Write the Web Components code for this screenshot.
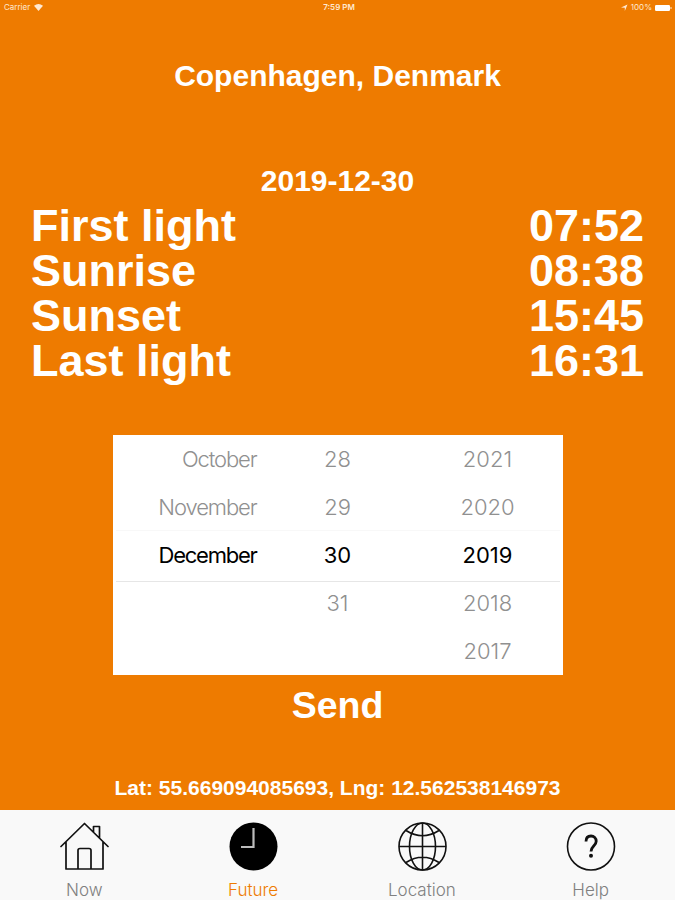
<!DOCTYPE html>
<html lang="en">

<head>
  <meta charset="UTF-8">
  <meta name="viewport" content="width=device-width, initial-scale=1.0">
  <title>Daylight</title>
  <style>
    html, body {
      margin: 0;
      height: 100%;
    }
    body {
      overflow: hidden;
      font-family: "Liberation Sans", Arial, sans-serif;
    }
  </style>
</head>

<body>
  <daylight-app>
    <status-bar slot="status"></status-bar>
    <text-line size="30">Copenhagen, Denmark</text-line>
    <text-line size="30" style="margin-top: 75px">2019-12-30</text-line>
    <div style="margin: 7px 31px 0">
      <time-row value="07:52">First light</time-row>
      <time-row value="08:38">Sunrise</time-row>
      <time-row value="15:45">Sunset</time-row>
      <time-row value="16:31">Last light</time-row>
    </div>
    <date-picker></date-picker>
    <text-line size="37.5" style="margin-top: 12px">Send</text-line>
    <text-line size="21" style="margin-top: 52px">Lat: 55.669094085693, Lng: 12.562538146973</text-line>
    <tab-bar slot="tabs">
      <tab-item label="Now">
        <svg width="50" height="50" viewBox="0 0 50 50" fill="none" stroke="#111" stroke-width="1.7" stroke-linejoin="round" stroke-linecap="round">
          <path d="M2 25.500 25.500 2.500 49 25.500M7 21v27h37V21M19 48V29.500q0-2 2-2h9q2 0 2 2V48M34.500 11V5.500h6V17" />
        </svg>
      </tab-item>
      <tab-item label="Future" active>
        <svg width="50" height="50" viewBox="0 0 50 50" fill="none">
          <circle cx="25.500" cy="25.500" r="24" fill="#000" />
          <path d="M25.500 7v19H13" stroke="#bbb" stroke-width="2.200" />
        </svg>
      </tab-item>
      <tab-item label="Location">
        <svg width="50" height="50" viewBox="0 0 50 50" fill="none" stroke="#111" stroke-width="1.6">
          <circle cx="25.500" cy="25.500" r="23.500" />
          <ellipse cx="25.500" cy="25.500" rx="13" ry="23.500" />
          <path d="M25.500 2v47M2 25.500h47M9 9.500q16.500 10.500 33 0M9 41.500q16.500-10.500 33 0" />
        </svg>
      </tab-item>
      <tab-item label="Help">
        <svg width="50" height="50" viewBox="0 0 50 50" fill="none" stroke="#111">
          <circle cx="25" cy="25.500" r="23.500" stroke-width="1.6" />
          <path d="M20 20.500c0-3.500 2-5.500 5-5.500s5.200 2 5.200 5.200c0 4.800-5.200 5-5.200 10.300" stroke-width="2.800" />
          <circle cx="25" cy="34.800" r="2" fill="#111" stroke="none" />
        </svg>
      </tab-item>
    </tab-bar>
  </daylight-app>

  <script>
    class DaylightApp extends HTMLElement {
      constructor() {
        super();
        this.attachShadow({ mode: 'open' }).innerHTML = `
          <style>
            :host {
              display: flex;
              flex-direction: column;
              height: 900px;
              background: #ee7b00;
              color: #fff;
            }
            main {
              flex: 1;
              padding-top: 46px;
            }
          </style>
          <slot name="status"></slot>
          <main><slot></slot></main>
          <slot name="tabs"></slot>
        `;
      }
    }

    class StatusBar extends HTMLElement {
      constructor() {
        super();
        this.attachShadow({ mode: 'open' }).innerHTML = `
          <style>
            :host {
              display: grid;
              grid-template-columns: 1fr auto 1fr;
              align-items: center;
              height: 15px;
              padding: 0 3px 0 4px;
              font: 8px/15px Inter, sans-serif;
              color: #ffe9d2;
            }
            div {
              display: flex;
              align-items: center;
            }
            .time {
              padding-left: 2px;
              font-weight: 600;
            }
            .right {
              justify-content: flex-end;
              gap: 3px;
            }
            .left {
              gap: 4px;
            }
          </style>
          <div class="left">
            <span>Carrier</span>
            <svg width="9" height="7" viewBox="0 0 9 7"><path d="M0 1.800Q4.500-1.600 9 1.800L4.500 7Z" fill="currentColor"/></svg>
          </div>
          <div class="time">7:59 PM</div>
          <div class="right">
            <svg width="7" height="7" viewBox="0 0 7 7"><path d="M0 3.500 6.500.500 3.800 7V3.800Z" fill="currentColor"/></svg>
            <span>100%</span>
            <svg width="17" height="6" viewBox="0 0 17 6"><rect width="15" height="6" rx="1.200" fill="#fff"/><path d="M16 2v2" stroke="#ffe9d2"/></svg>
          </div>
        `;
      }
    }

    class TextLine extends HTMLElement {
      constructor() {
        super();
        this.attachShadow({ mode: 'open' });
      }

      connectedCallback() {
        this.shadowRoot.innerHTML = `
          <style>
            :host {
              display: block;
              text-align: center;
              font-weight: bold;
              font-size: ${this.getAttribute('size')}px;
              line-height: 1;
            }
          </style>
          <slot></slot>
        `;
      }
    }

    class TimeRow extends HTMLElement {
      constructor() {
        super();
        this.attachShadow({ mode: 'open' });
      }

      connectedCallback() {
        this.shadowRoot.innerHTML = `
          <style>
            :host {
              display: flex;
              justify-content: space-between;
              font-size: 45px;
              font-weight: bold;
              line-height: 45px;
            }
          </style>
          <span><slot></slot></span>
          <span>${this.getAttribute('value')}</span>
        `;
      }
    }

    class DatePicker extends HTMLElement {
      constructor() {
        super();
        this.attachShadow({ mode: 'open' });
      }

      connectedCallback() {
        const rows = [
          ['October', '28', '2021'],
          ['November', '29', '2020'],
          ['December', '30', '2019'],
          ['', '31', '2018'],
          ['', '', '2017']
        ];
        this.shadowRoot.innerHTML = `
          <style>
            :host {
              display: block;
              width: 450px;
              height: 240px;
              margin: 52px auto 0;
              background: #fff;
              color: #909090;
              font: 300 22px/49px Inter, sans-serif;
            }
            .row {
              display: grid;
              grid-template-columns: 145px 160px 140px;
              height: 48px;
              text-align: center;
            }
            .row span:first-child {
              padding-right: 1px;
              text-align: right;
              letter-spacing: -1.1px;
            }
            .selected {
              height: 50px;
              margin: -1px 3px -3px;
              grid-template-columns: 142px 160px 140px;
              border-top: 1px solid #f8f8f8;
              border-bottom: 1px solid #e6e6e6;
              font-weight: 400;
              color: #000;
            }
            .selected span:first-child {
              letter-spacing: -1.25px;
            }
          </style>
          ${rows.map((row, i) => `
            <div class="row ${i === 2 ? 'selected' : ''}">
              ${row.map(text => `<span>${text}</span>`).join('')}
            </div>
          `).join('')}
        `;
      }
    }

    class TabBar extends HTMLElement {
      constructor() {
        super();
        this.attachShadow({ mode: 'open' }).innerHTML = `
          <style>
            :host {
              display: grid;
              grid-template-columns: repeat(4, 1fr);
              height: 90px;
              background: #f9f9f9;
            }
          </style>
          <slot></slot>
        `;
      }
    }

    class TabItem extends HTMLElement {
      constructor() {
        super();
        this.attachShadow({ mode: 'open' });
      }

      connectedCallback() {
        this.shadowRoot.innerHTML = `
          <style>
            :host {
              display: flex;
              flex-direction: column;
              align-items: center;
              gap: 8px;
              padding-top: 11px;
              color: #808080;
              font: 300 17px/22px Inter, sans-serif;
            }
            :host([active]) {
              color: #ee7b00;
            }
            ::slotted(svg) {
              display: block;
            }
          </style>
          <slot></slot>
          <span>${this.getAttribute('label')}</span>
        `;
      }
    }

    customElements.define('daylight-app', DaylightApp);
    customElements.define('status-bar', StatusBar);
    customElements.define('text-line', TextLine);
    customElements.define('time-row', TimeRow);
    customElements.define('date-picker', DatePicker);
    customElements.define('tab-bar', TabBar);
    customElements.define('tab-item', TabItem);
  </script>
</body>

</html>
